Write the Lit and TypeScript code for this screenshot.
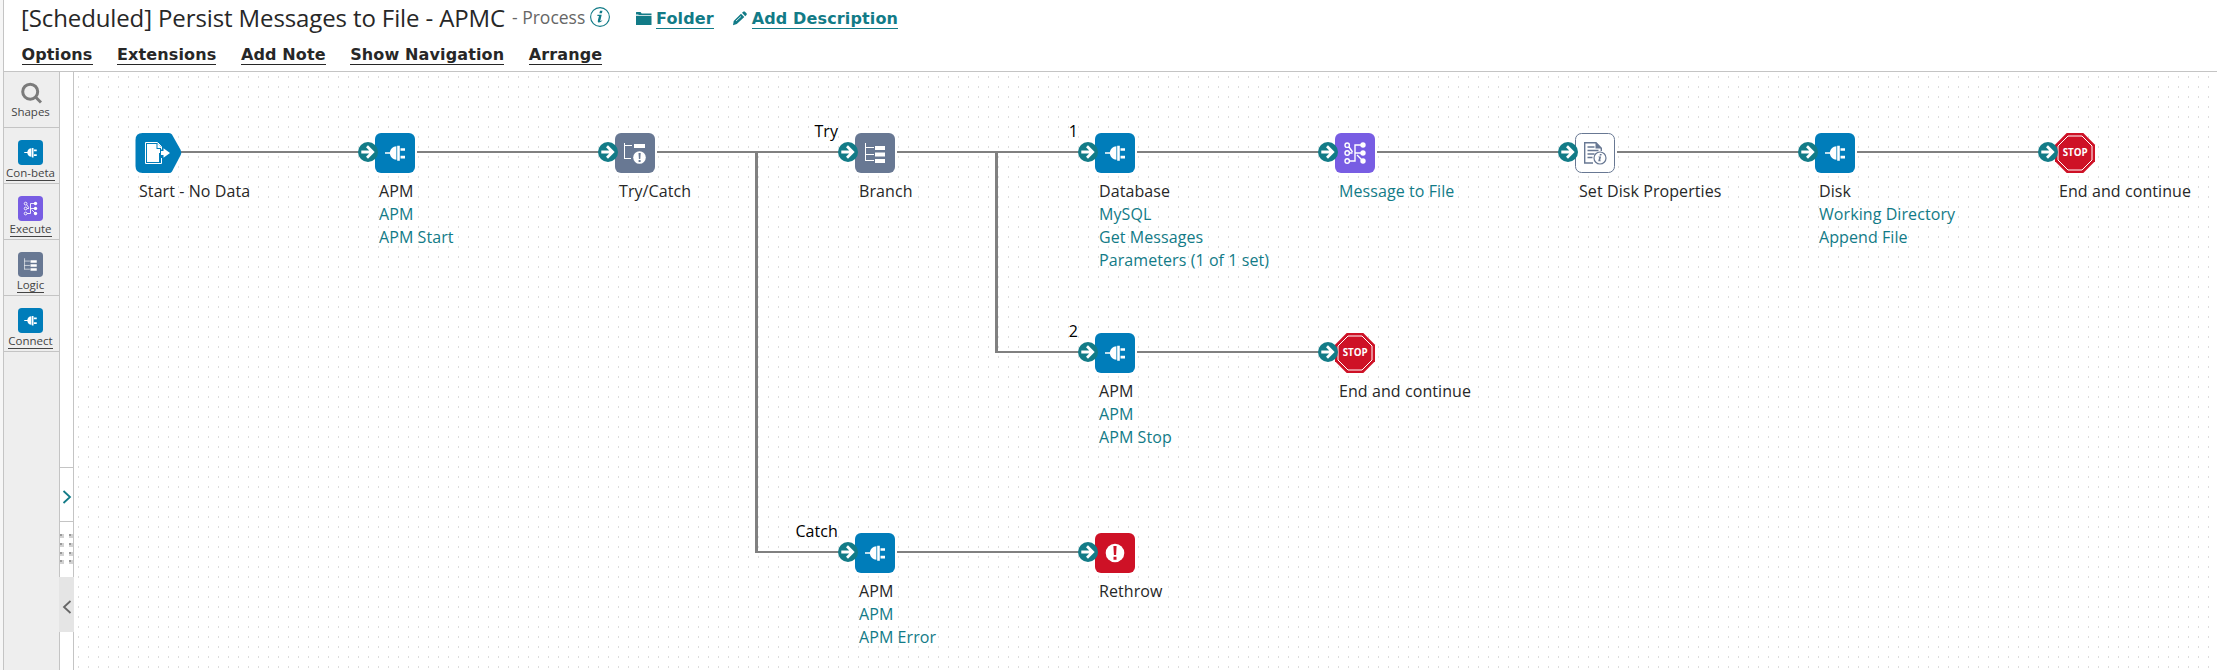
import { LitElement, html, css, svg, nothing } from "lit";
import { customElement, property } from "lit/decorators.js";

const plug = svg`<path fill="#fff" d="M10 19.200h4.800c.8-3.700 3-5.700 6.600-6v13.600c-3.600-.3-5.800-2.300-6.600-6H10zM22.200 12.800h2.600v15h-2.600zM25.500 15.200H30v2.600h-4.500zM25.500 22.800H30v2.600h-4.500z"/>`;

const glyphs: Record<string, unknown> = {
  start: svg`<path fill="#007dba" d="M7.500 0H34q2 0 3 1.500L45.700 17q1 2.500 0 5L37 38.500q-1 1.500-3 1.500H7.500q-7 0-7-7V7q0-7 7-7z"/>
    <path fill="none" stroke="#fff" stroke-width="1" d="M26.500 25v5.500h-16v-21H22.500l4 4v3"/>
    <path fill="#fff" d="M12 11h9.500v5h3.500v4h-1v9H12zM22.500 10l4.500 5h-4.500zM26 18h2.500v-2.700l6.500 4.700-6.500 4.700V22H26z"/>`,
  plug: svg`<rect width="40" height="40" rx="6" fill="#007dba"/>${plug}`,
  branch: svg`<rect width="40" height="40" rx="6" fill="#687893"/>
    <path fill="none" stroke="#fff" d="M10.500 10v18M10 14.500h9M10 21.500h9M10 27.500h9"/>
    <path fill="#fff" d="M20 13h10v4H20zM20 19.500h10v4H20zM20 26h10v4H20z"/>`,
  trycatch: svg`<rect width="40" height="40" rx="6" fill="#687893"/>
    <path fill="none" stroke="#fff" d="M9.500 10v16M9 12.500h8M9 25.500h7"/>
    <path fill="#fff" d="M19 11h11v4H19z"/><circle cx="24.500" cy="24.500" r="6.300" fill="#fff"/>
    <path fill="#687893" d="M23.500 20h2.200l-.4 6h-1.400zM23.600 27h2v2h-2z"/>`,
  map: svg`<rect width="40" height="40" rx="6" fill="#785de3"/>
    <g fill="none" stroke="#fff" stroke-width="1.400"><circle cx="12.200" cy="12.200" r="2.200"/><circle cx="12.200" cy="20" r="2.200"/><circle cx="12.200" cy="28" r="2.200"/>
    <path d="M14 14l3.500 5M14.500 20h3M14.500 28H20V12h8M20 20h8M22 22l5 5"/></g>
    <g fill="#fff"><circle cx="28" cy="12" r="2.700"/><circle cx="28" cy="20" r="2.700"/><circle cx="28" cy="28" r="2.700"/></g>`,
  props: svg`<rect x=".5" y=".5" width="39" height="39" rx="6" fill="#fff" stroke="#687893"/>
    <path fill="none" stroke="#687893" stroke-width="1.400" d="M18 30H9.700V9.700H21l5.300 5.500V18M12.500 14h7M12.500 17.500h11M12.500 21h7M12.500 24.500h5"/>
    <path fill="#687893" d="M20.500 9l6.500 6.500h-6.500z"/><circle cx="25" cy="25" r="6" fill="#fff" stroke="#687893" stroke-width="1.200"/>
    <path fill="#687893" d="M24.900 21h1.800l-.4 1.600h-1.800zM23.500 23.500h2.600l-1 4h.8l-.2.800h-2.500l1-4h-.9z"/>`,
  stop: svg`<path fill="#ce1126" d="M11.700 0h16.600L40 11.700v16.600L28.300 40H11.700L0 28.300V11.700z"/>
    <path fill="none" stroke="#fff" d="M13 3h14l10 10v14L27 37H13L3 27V13z"/>
    <text x="20.200" y="23.400" class="stop" text-anchor="middle" textLength="25" lengthAdjust="spacingAndGlyphs">STOP</text>`,
  rethrow: svg`<rect width="40" height="40" rx="6" fill="#ce1126"/><circle cx="20" cy="20" r="9.300" fill="#fff"/>
    <path fill="#ce1126" d="M18.400 13h3.200l-.5 9h-2.200zM18.500 23.700h3v3h-3z"/>`,
};

@customElement("shape-icon")
class ShapeIcon extends LitElement {
  @property() name = "plug";
  @property({ type: Number }) size = 40;
  static styles = css`
    :host { display: block; flex: none; }
    svg { display: block; overflow: visible; }
    .stop { font: 700 10px "Open Sans", sans-serif; fill: #fff; letter-spacing: 0; }
  `;
  render() {
    return html`<svg width=${this.size} height=${this.size} viewBox="0 0 40 40">${glyphs[this.name]}</svg>`;
  }
}

interface Step { x: number; y: number; icon: string; label?: string; links?: string[]; tag?: string; }

const steps: Step[] = [
  { x: 135, y: 133, icon: "start", label: "Start - No Data" },
  { x: 375, y: 133, icon: "plug", label: "APM", links: ["APM", "APM Start"] },
  { x: 615, y: 133, icon: "trycatch", label: "Try/Catch" },
  { x: 855, y: 133, icon: "branch", label: "Branch", tag: "Try" },
  { x: 1095, y: 133, icon: "plug", label: "Database", links: ["MySQL", "Get Messages", "Parameters (1 of 1 set)"], tag: "1" },
  { x: 1335, y: 133, icon: "map", links: ["Message to File"] },
  { x: 1575, y: 133, icon: "props", label: "Set Disk Properties" },
  { x: 1815, y: 133, icon: "plug", label: "Disk", links: ["Working Directory", "Append File"] },
  { x: 2055, y: 133, icon: "stop", label: "End and continue" },
  { x: 1095, y: 333, icon: "plug", label: "APM", links: ["APM", "APM Stop"], tag: "2" },
  { x: 1335, y: 333, icon: "stop", label: "End and continue" },
  { x: 855, y: 533, icon: "plug", label: "APM", links: ["APM", "APM Error"], tag: "Catch" },
  { x: 1095, y: 533, icon: "rethrow", label: "Rethrow" },
];

/* x, y, width, height of every connector segment */
const wires = [
  [181, 151, 180, 2], [417, 151, 184, 2], [657, 151, 184, 2], [897, 151, 184, 2],
  [1137, 151, 184, 2], [1377, 151, 184, 2], [1617, 151, 184, 2], [1857, 151, 184, 2],
  [755, 153, 3, 400], [755, 551, 88, 2], [897, 551, 184, 2],
  [995, 153, 3, 200], [995, 351, 88, 2], [1137, 351, 184, 2],
];

@customElement("process-canvas")
class ProcessCanvas extends LitElement {
  static styles = css`
    :host { display: block; position: relative; overflow: hidden; background: #fff; }
    .world { position: absolute; left: -74px; top: -72px; width: 2217px; height: 670px; }
    .world > svg { display: block; }
    .step { position: absolute; font-size: 16px; letter-spacing: 0.080px; color: #272727; }
    .badge { position: absolute; left: -17px; top: 9px; }
    .tag { position: absolute; right: calc(100% + 17px); top: -13px; color: #000; white-space: nowrap; line-height: 23px; }
    .text { display: flex; flex-direction: column; padding: 7px 0 0 4px; line-height: 23px; white-space: nowrap; width: 0; }
    .link { color: #127b87; }
  `;
  render() {
    return html`<div class="world">
      <svg width="2217" height="670">
        <defs><pattern id="dots" x="8" y="6" width="10" height="10" patternUnits="userSpaceOnUse"><rect width="1" height="2" fill="#dcdcdc"/></pattern></defs>
        <rect width="2217" height="670" fill="url(#dots)"/>
        ${wires.map(([x, y, w, h]) => svg`<rect x=${x} y=${y} width=${w} height=${h} fill="#808080"/>`)}
      </svg>
      ${steps.map((s) => html`<div class="step" style="left:${s.x}px;top:${s.y}px">
        <shape-icon name=${s.icon}></shape-icon>
        ${s.icon === "start" ? nothing : html`<svg class="badge" width="20" height="20" viewBox="0 0 20 20">
          <circle cx="10" cy="10" r="10" fill="#127b87"/>
          <path d="M3.300 10h11.500M9 4.300l5.700 5.700L9 15.700" fill="none" stroke="#fff" stroke-width="2.800"/></svg>`}
        ${s.tag ? html`<span class="tag">${s.tag}</span>` : nothing}
        <div class="text">
          ${s.label ? html`<span>${s.label}</span>` : nothing}
          ${(s.links ?? []).map((l) => html`<span class="link">${l}</span>`)}
        </div>
      </div>`)}
    </div>`;
  }
}

const palette = [["plug", "Con-beta"], ["map", "Execute"], ["branch", "Logic"], ["plug", "Connect"]];

@customElement("app-root")
class AppRoot extends LitElement {
  static styles = css`
    * { box-sizing: border-box; }
    :host { display: flex; height: 670px; background: #fff; overflow: hidden; font-family: "Open Sans", "Noto Sans", sans-serif; color: #272727; }
    .edge { width: 4px; flex: none; background: #f6f6f6; border-right: 1px solid #c4c4c4; }
    .page { flex: 1; min-width: 0; display: flex; flex-direction: column; }
    .head { height: 72px; flex: none; padding: 0 0 0 18px; border-bottom: 1px solid #c4c4c4; }
    .row { display: flex; align-items: center; height: 36px; white-space: nowrap; }
    .title { font-size: 24px; line-height: 36px; letter-spacing: -0.115px; width: 484px; margin-left: -1px; }
    .kind { font-size: 17.500px; color: #666; margin-left: 7px; line-height: 34px; width: 74px; padding-bottom: 2px; }
    .info { margin: -3px 25px 0 4px; }
    .action, .menu { font: 700 16px/19px "DejaVu Sans", sans-serif; letter-spacing: 0.13px; }
    .action { color: #127b87; border-bottom: 1px solid #127b87; margin: 2px 0 0 4px; }
    .pencil { margin-left: 18px; }
    .bar { display: flex; gap: 24.500px; padding-top: 9px; margin-left: -0.500px; }
    .menu { border-bottom: 1px solid #272727; height: 20px; }
    .body { flex: 1; display: flex; min-height: 0; }
    .side { width: 56px; flex: none; background: #eee; border-right: 1px solid #c4c4c4; }
    .tool { height: 56px; display: flex; flex-direction: column; align-items: center; border-bottom: 1px solid #c4c4c4; font-size: 11.500px; line-height: 15px; padding: 12px 2px 0 0; color: #444; }
    .tool .name { border-bottom: 1px solid #444; }
    .search { padding-top: 10px; }
    .tool.search .name { border: 0; }
    .gutter { width: 14px; flex: none; border-right: 1px solid #c4c4c4; display: flex; flex-direction: column; }
    .tab { margin-top: 395px; height: 55px; border: solid #c4c4c4; border-width: 1px 0; display: flex; align-items: center; padding-top: 4px; }
    .grip { height: 55px; padding-top: 12px; }
    .fold { height: 55px; background: #e5e5e5; display: flex; align-items: center; margin: 0 -1px; padding: 4px 0 0 1px; }
    process-canvas { flex: 1; }
    svg { display: block; flex: none; }
  `;
  render() {
    return html`
      <div class="edge"></div>
      <div class="page">
        <div class="head">
          <div class="row">
            <span class="title">[Scheduled] Persist Messages to File - APMC</span>
            <span class="kind">- Process</span>
            <svg class="info" width="20" height="20" viewBox="0 0 20 20"><circle cx="10" cy="10" r="9.400" fill="none" stroke="#127b87" stroke-width="1.100"/>
              <path fill="#127b87" d="M10 3.800h2.500l-.6 2.400H9.400zM7.500 7.800h4.200l-1.400 5.900q0 .9 1.600-.5l.5.600q-2.200 2.100-4 1.700-1-.4-.5-2.200l1.100-4.400H7.300z"/></svg>
            <svg width="17" height="15" viewBox="0 0 17 15"><path fill="#127b87" d="M1 1.500Q1 1 1.500 1h4l1.200 1.500H16.500V4H3.500v-.6H1zM1 4.800h15.500V14H1z"/></svg>
            <span class="action">Folder</span>
            <svg class="pencil" width="16" height="15" viewBox="0 0 16 15"><path fill="#127b87" d="M9 2.700l3.300 3.400-7.500 7L1 14.300 1.700 10zM10 1.800L11.500.5h1.200l2 2.100v1.200L13.200 5.200z"/><path stroke="#fff" stroke-width=".8" d="M4 10l5-4.600"/></svg>
            <span class="action">Add Description</span>
          </div>
          <div class="bar">${["Options", "Extensions", "Add Note", "Show Navigation", "Arrange"].map((m) => html`<span class="menu">${m}</span>`)}</div>
        </div>
        <div class="body">
          <div class="side">
            <div class="tool search">
              <svg width="22" height="22" viewBox="0 0 22 22"><circle cx="10.200" cy="9.700" r="7.500" fill="none" stroke="#7b7b7b" stroke-width="3"/><path stroke="#7b7b7b" stroke-width="3" d="M15 14.500l6 6"/></svg>
              <span class="name">Shapes</span>
            </div>
            ${palette.map(([i, n]) => html`<div class="tool"><shape-icon name=${i} size="25"></shape-icon><span class="name">${n}</span></div>`)}
          </div>
          <div class="gutter">
            <div class="tab"><svg width="13" height="16" viewBox="0 0 13 16"><path d="M3.500 2l6.500 6-6.500 6" fill="none" stroke="#127b87" stroke-width="1.800"/></svg></div>
            <div class="grip"><svg width="13" height="32" viewBox="0 0 13 32">
              ${[0, 9, 18, 26].map((y) => [0, 9].map((x) => svg`<rect x=${x} y=${y} width="4" height="4" fill="#d2d2d2"/><rect x=${x} y=${y} width="2" height="2" fill="#999"/>`))}</svg></div>
            <div class="fold"><svg width="13" height="16" viewBox="0 0 13 16"><path d="M10.500 2L4 8l6.500 6" fill="none" stroke="#666" stroke-width="1.800"/></svg></div>
          </div>
          <process-canvas></process-canvas>
        </div>
      </div>`;
  }
}
